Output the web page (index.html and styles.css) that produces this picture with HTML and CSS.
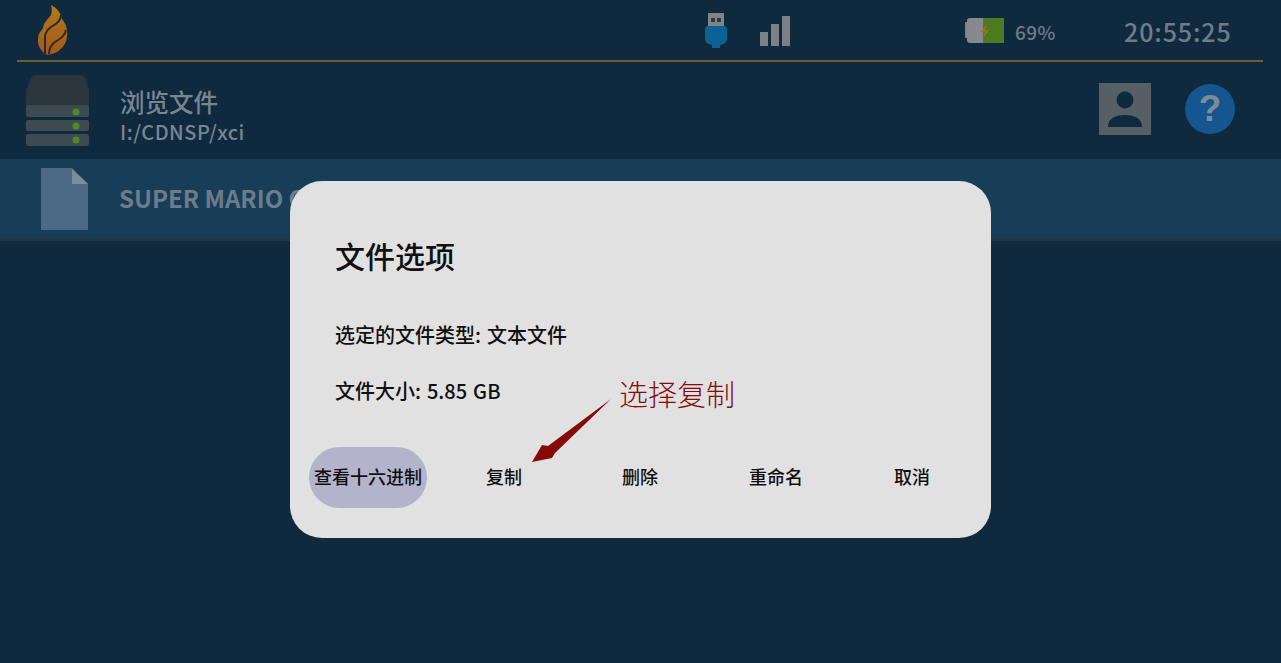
FILE: index.html
```html
<!DOCTYPE html>
<html lang="zh">
<head>
<meta charset="utf-8">
<title>文件选项</title>
<link rel="stylesheet" href="styles.css">
</head>
<body>
<div class="app">
  <header class="topbar">
    <svg class="logo" width="32" height="52" viewBox="0 0 32 52">
      <defs>
        <linearGradient id="flame" x1="0" y1="0" x2="0" y2="1">
          <stop offset="0" stop-color="#b07c1c"/>
          <stop offset="1" stop-color="#a4581a"/>
        </linearGradient>
      </defs>
      <path fill="url(#flame)" d="M14 1c6 3 10 8 11 14 4 5 6 11 5 18-1 8-7 15-15 17-4 1-7 1-8-1C3 45 0 40 1 35c0-5 3-8 5-11 1-6 5-9 8-13 1-3 1-6 0-10z"/>
      <path fill="none" stroke="#2b2a28" stroke-width="2" d="M24 11c0 6-5 9-10 12-4 3-6 6-6 10v17M29 26c-1 6-6 9-11 12-4 3-6 7-6 12"/>
    </svg>
    <div class="usb">
      <svg width="22" height="36" viewBox="0 0 22 36">
        <rect x="3" y="0" width="16" height="14" fill="#7f8489"/>
        <rect x="6" y="5" width="4" height="4" fill="#33363a"/>
        <rect x="12" y="5" width="4" height="4" fill="#33363a"/>
        <path fill="#0b6295" d="M0 16q0-3 3-3h16q3 0 3 3v10q0 4-4 5l-3 1v3H7v-3l-3-1q-4-1-4-5z"/>
      </svg>
    </div>
    <div class="signal">
      <span class="bar bar-s"></span><span class="bar bar-m"></span><span class="bar bar-l"></span>
    </div>
    <div class="battery">
      <svg width="40" height="25" viewBox="0 0 40 25">
        <rect x="0" y="4" width="3" height="16" rx="1" fill="#7e8286"/>
        <path fill="#85898d" d="M2 3q0-3 3-3h13v25H5q-3 0-3-3z"/>
        <rect x="18" y="0" width="21" height="25" fill="#4f7a22"/>
        <path fill="#a5720f" d="M22 6l-6 8h4l-2 6 6-8h-4z"/>
      </svg>
    </div>
    <span class="percent">69%</span>
    <span class="clock">20:55:25</span>
  </header>
  <div class="rule"></div>
  <section class="crumb">
    <svg class="drive" width="66" height="72" viewBox="0 0 66 72">
      <path fill="#2b353c" d="M10 0h46q3 0 4 3l4 12v16H1V15L6 3q1-3 4-3z"/>
      <rect x="1" y="30" width="63" height="12" rx="2" fill="#3e4a52"/>
      <rect x="1" y="45" width="63" height="11" rx="2" fill="#3e4a52"/>
      <rect x="1" y="59" width="63" height="12" rx="3" fill="#3e4a52"/>
      <circle cx="51" cy="37" r="3.5" fill="#4e8a22"/>
      <circle cx="51" cy="51" r="3.5" fill="#4e8a22"/>
      <circle cx="51" cy="65" r="3.5" fill="#4e8a22"/>
    </svg>
    <div class="crumb-text">
      <div class="crumb-title">浏览文件</div>
      <div class="crumb-path">I:/CDNSP/xci</div>
    </div>
    <svg class="user" width="52" height="52" viewBox="0 0 52 52">
      <rect width="52" height="52" fill="#565f63"/>
      <circle cx="26" cy="17" r="8.5" fill="#0f2a3f"/>
      <path fill="#0f2a3f" d="M9 44c0-9 8-12 17-12s17 3 17 12z"/>
    </svg>
    <div class="help">?</div>
  </section>
  <section class="file-row">
    <svg class="file-icon" width="47" height="62" viewBox="0 0 47 62">
      <path fill="#4c6a85" d="M0 0h31l16 16v46H0z"/>
      <path fill="#7b8c9b" d="M31 1l16 15H31z"/>
    </svg>
    <span class="file-name">SUPER MARIO ODYSSEY</span>
  </section>
</div>

<div class="dialog">
  <h1 class="dialog-title">文件选项</h1>
  <p class="dialog-line">选定的文件类型: 文本文件</p>
  <p class="dialog-line">文件大小: 5.85 GB</p>
  <div class="actions">
    <span class="action action-active">查看十六进制</span>
    <span class="action">复制</span>
    <span class="action">删除</span>
    <span class="action">重命名</span>
    <span class="action">取消</span>
  </div>
</div>

<div class="note">选择复制</div>
<svg class="arrow" width="82" height="66" viewBox="0 0 82 66">
  <path fill="#860a0a" d="M81 1L18 48l-6-1L2 64l20-4 3-5z"/>
</svg>
</body>
</html>
```
FILE: styles.css
```css
* { box-sizing: border-box; }
html, body { margin: 0; height: 100%; }
body {
  background: #0f2a3f;
  font-family: "Noto Sans CJK SC", "Noto Sans", sans-serif;
  overflow: hidden;
  position: relative;
}
.app { display: flex; flex-direction: column; height: 663px; }
.topbar {
  height: 60px;
  display: flex;
  align-items: center;
  padding-left: 37px;
  flex: none;
}
.logo { margin-right: 636px; flex: none; }
.usb { width: 22px; height: 36px; margin-top: 2px; margin-right: 33px; }
.usb svg { display: block; }
.signal { display: flex; align-items: flex-end; gap: 3px; height: 30px; margin-top: 2px; margin-right: 175px; }
.bar { display: block; width: 8px; background: #7d8185; }
.bar-s { height: 14px; }
.bar-m { height: 22px; }
.bar-l { height: 30px; }
.battery { width: 40px; height: 25px; margin-top: 1px; margin-right: 10px; }
.battery svg { display: block; }
.percent { color: #6f7c86; font-size: 19px; letter-spacing: 0.4px; width: 109px; margin-top: 3px; font-weight: 500; }
.clock { color: #6f7c86; font-size: 25px; letter-spacing: 0.9px; margin-top: 1px; font-weight: 500; }
.rule { height: 2px; margin: 0 18px 0 17px; background: #6c5a30; flex: none; }
.crumb {
  height: 97px;
  display: flex;
  align-items: center;
  padding-left: 25px;
  flex: none;
}
.drive { flex: none; margin-right: 29px; margin-top: 1px; }
.crumb-text { width: 979px; flex: none; padding-top: 10px; }
.crumb-title { color: #7a858e; font-size: 24.5px; line-height: 32px; font-weight: 500; }
.crumb-path { color: #7a858e; font-size: 20px; line-height: 28px; letter-spacing: 0.5px; font-weight: 500; }
.user { flex: none; margin-right: 34px; margin-top: -4px; }
.help {
  width: 50px;
  height: 50px;
  border-radius: 50%;
  background: #155690;
  color: #7d8b97;
  font-family: "Liberation Sans", sans-serif;
  font-weight: 700;
  font-size: 37px;
  line-height: 50px;
  text-align: center;
  margin-top: -4px;
}
.file-row {
  height: 82px;
  background: #173d59;
  display: flex;
  align-items: center;
  padding-left: 41px;
  border-bottom: 2px solid #27343c;
  flex: none;
}
.file-icon { margin-right: 31px; flex: none; }
.file-name { color: #6d7c88; font-size: 24px; font-weight: 600; margin-top: -3px; }
.dialog {
  position: absolute;
  left: 290px;
  top: 181px;
  width: 701px;
  height: 357px;
  background: #e1e1e1;
  border-radius: 32px;
  padding: 50px 20px 30px 45px;
  display: flex;
  flex-direction: column;
  color: #101010;
}
.dialog-title { margin: 0 0 42px; font-size: 30px; line-height: 48px; font-weight: 500; }
.dialog-line { margin: 0 0 28px; font-size: 20px; line-height: 28px; font-weight: 500; word-spacing: 1.5px; }
.actions {
  position: absolute;
  left: 19px;
  top: 266px;
  display: flex;
  gap: 18px;
}
.action {
  width: 118px;
  height: 61px;
  padding-bottom: 4px;
  border-radius: 31px;
  display: flex;
  align-items: center;
  justify-content: center;
  font-size: 18px;
  font-weight: 500;
  white-space: nowrap;
}
.action-active { background: #b3b3cb; }
.note {
  position: absolute;
  left: 619px;
  top: 373px;
  color: #860c0c;
  font-size: 29px;
  line-height: 40px;
  font-weight: 300;
}
.arrow { position: absolute; left: 530px; top: 398px; }
```
